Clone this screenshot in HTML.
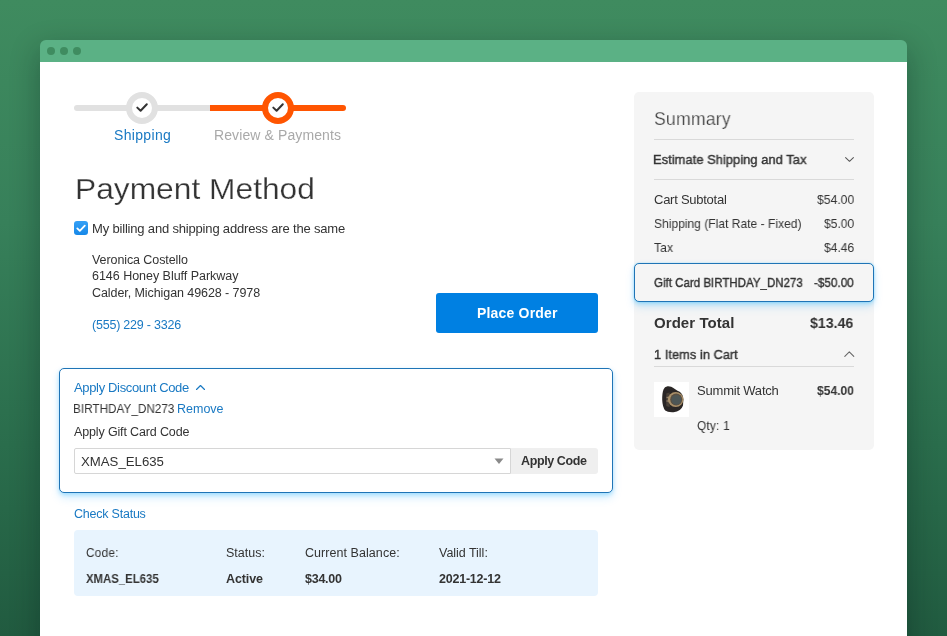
<!DOCTYPE html>
<html><head><meta charset="utf-8">
<style>
*{margin:0;padding:0;box-sizing:border-box}
html,body{width:947px;height:636px;overflow:hidden}
body{position:relative;font-family:"Liberation Sans",sans-serif;background:linear-gradient(180deg,#3f8b5f 0%,#37805a 35%,#2a6d4c 70%,#215b40 100%)}
.t{position:absolute;white-space:nowrap;line-height:1;font-family:"Liberation Sans",sans-serif;will-change:transform;-webkit-font-smoothing:antialiased}
.win{position:absolute;left:40px;top:40px;width:867px;height:620px;background:linear-gradient(#5bb185 0,#5bb185 22px,#fff 22px);border-radius:6px 6px 0 0;box-shadow:0 10px 30px rgba(0,20,20,0.33)}
.bar{position:absolute;left:0;top:0;width:867px;height:22px;background:transparent}
.dot{position:absolute;top:7px;width:8px;height:8px;border-radius:50%;background:#3f8c60}
.abs{position:absolute}
</style></head><body>
<div class="win">
  <div class="bar">
    <div class="dot" style="left:7px"></div>
    <div class="dot" style="left:20px"></div>
    <div class="dot" style="left:33px"></div>
  </div>
</div>
<!-- progress -->
<div class="abs" style="left:74px;top:105px;width:140px;height:6px;background:#e1e1e1;border-radius:3px 0 0 3px"></div>
<div class="abs" style="left:210px;top:105px;width:136px;height:6px;background:#ff5501;border-radius:0 3px 3px 0"></div>
<div class="abs" style="left:126px;top:92px;width:32px;height:32px;border-radius:50%;border:6px solid #e1e1e1;background:#fff"></div>
<div class="abs" style="left:262px;top:92px;width:32px;height:32px;border-radius:50%;border:6px solid #ff5501;background:#fff"></div>
<svg class="abs" style="left:0;top:0" width="947" height="636">
  <path d="M137.3 107.6 L140.6 110.8 L146.8 104.3" fill="none" stroke="#333" stroke-width="2" stroke-linecap="round" stroke-linejoin="round"/>
  <path d="M273.3 107.6 L276.6 110.8 L282.8 104.3" fill="none" stroke="#333" stroke-width="2" stroke-linecap="round" stroke-linejoin="round"/>
</svg>
<!-- checkbox -->
<div class="abs" style="left:74px;top:221px;width:14px;height:14px;border-radius:3px;background:linear-gradient(#35a0f6,#1688e8)"></div>
<svg class="abs" style="left:74px;top:221px" width="14" height="14"><path d="M3.3 7.4 L5.8 9.8 L10.8 4.6" fill="none" stroke="#fff" stroke-width="1.8" stroke-linecap="round" stroke-linejoin="round"/></svg>
<!-- place order -->
<div class="abs" style="left:436px;top:293px;width:162px;height:40px;border-radius:3px;background:#0080e2"></div>
<!-- discount panel -->
<div class="abs" style="left:59px;top:368px;width:554px;height:125px;border:1.5px solid #1f74b6;border-radius:5px;background:#fff;box-shadow:0 2px 4px rgba(0,170,255,0.28),0 5px 10px rgba(0,160,255,0.16)"></div>
<svg class="abs" style="left:195px;top:383px" width="12" height="9"><path d="M1.5 6.5 L5.5 2.5 L9.5 6.5" fill="none" stroke="#1979c3" stroke-width="1.15" stroke-linecap="round" stroke-linejoin="round"/></svg>
<div class="abs" style="left:74px;top:448px;width:437px;height:26px;border:1px solid #d6d6d6;border-radius:2px 0 0 2px;background:#fff"></div>
<svg class="abs" style="left:494px;top:458px" width="10" height="7"><path d="M0.5 0.5 L9.5 0.5 L5 6 Z" fill="#8a8a8a"/></svg>
<div class="abs" style="left:511px;top:448px;width:87px;height:26px;border-radius:0 3px 3px 0;background:#efefef"></div>
<!-- status box -->
<div class="abs" style="left:74px;top:530px;width:524px;height:66px;border-radius:4px;background:#e8f4fe"></div>
<!-- summary -->
<div class="abs" style="left:634px;top:92px;width:240px;height:358px;border-radius:5px;background:#f5f5f5"></div>
<div class="abs" style="left:654px;top:139px;width:200px;height:1px;background:#d9d9d9"></div>
<div class="abs" style="left:654px;top:179px;width:200px;height:1px;background:#d9d9d9"></div>
<svg class="abs" style="left:843px;top:154px" width="12" height="10"><path d="M2.6 3.6 L6.5 7.3 L10.4 3.6" fill="none" stroke="#555" stroke-width="1.05" stroke-linecap="round" stroke-linejoin="round"/></svg>
<div class="abs" style="left:634px;top:263px;width:240px;height:39px;border:1.5px solid #1f74b6;border-radius:5px;background:#f5f5f5;box-shadow:0 0 1.5px rgba(0,190,255,0.35),0 2px 4px rgba(0,170,255,0.28),0 5px 10px rgba(0,160,255,0.16)"></div>
<svg class="abs" style="left:843px;top:349px" width="12" height="10"><path d="M1.8 7.4 L6.3 2.8 L10.8 7.4" fill="none" stroke="#666" stroke-width="1.05" stroke-linecap="round" stroke-linejoin="round"/></svg>
<div class="abs" style="left:654px;top:366px;width:200px;height:1px;background:#d9d9d9"></div>
<div class="abs" style="left:654px;top:382px;width:35px;height:35px;background:#fff"></div>
<svg class="abs" style="left:654px;top:382px" width="36" height="36">
  <defs><filter id="bl" x="-20%" y="-20%" width="140%" height="140%"><feGaussianBlur stdDeviation="0.45"/></filter></defs>
  <g filter="url(#bl)">
  <path d="M9.5 7.5 Q10.5 4.5 13.5 4.2 Q17.5 4 19 5.8 L23.5 8.8 Q29.3 11 29.4 17.5 L29 23.5 Q27 29.5 19.5 30.2 Q13.5 30.5 11.2 28.5 Q8.5 25 8.2 18 Q8.1 11 9.5 7.5Z" fill="#2c2825"/>
  <path d="M12.3 11.5 L15.5 10.5 L15.5 25 L12.3 24Z" fill="#4a4038"/>
  <rect x="12.5" y="14.8" width="2.6" height="1.4" fill="#8d7d68"/>
  <rect x="12.5" y="18.3" width="2.6" height="1.4" fill="#8d7d68"/>
  <ellipse cx="21.7" cy="17.5" rx="7.8" ry="7.5" fill="#a98f69"/>
  <ellipse cx="22.2" cy="17.6" rx="6" ry="6" fill="#5a4f42"/>
  <ellipse cx="22.4" cy="17.8" rx="4.9" ry="4.9" fill="#4e5656"/>
  </g>
</svg>
<div class="t" id="t0" style="left:113.92px;top:127.75px;font-size:14px;font-weight:400;color:#1979c3;letter-spacing:0.328px;">Shipping</div>
<div class="t" id="t1" style="left:214.00px;top:128.05px;font-size:14px;font-weight:400;color:#a9a9a9;letter-spacing:0.108px;">Review &amp; Payments</div>
<div class="t" id="t2" style="left:74.68px;top:174.00px;font-size:30px;font-weight:400;color:#333;letter-spacing:0.000px;transform:scaleX(1.0578);transform-origin:0 0;-webkit-text-stroke:0.25px #fff;">Payment Method</div>
<div class="t" id="t3" style="left:92.30px;top:221.80px;font-size:13px;font-weight:400;color:#333333;letter-spacing:-0.178px;">My billing and shipping address are the same</div>
<div class="t" id="t4" style="left:92.40px;top:254.02px;font-size:12.5px;font-weight:400;color:#333333;letter-spacing:-0.083px;">Veronica Costello</div>
<div class="t" id="t5" style="left:92.40px;top:269.52px;font-size:12.5px;font-weight:400;color:#333333;letter-spacing:-0.027px;">6146 Honey Bluff Parkway</div>
<div class="t" id="t6" style="left:92.40px;top:286.82px;font-size:12.5px;font-weight:400;color:#333333;letter-spacing:-0.075px;">Calder, Michigan 49628 - 7978</div>
<div class="t" id="t7" style="left:92.40px;top:318.72px;font-size:12.5px;font-weight:400;color:#1979c3;letter-spacing:-0.218px;">(555) 229 - 3326</div>
<div class="t" id="t8" style="left:476.90px;top:305.95px;font-size:14px;font-weight:700;color:#fff;letter-spacing:0.185px;">Place Order</div>
<div class="t" id="t9" style="left:74.30px;top:381.30px;font-size:13px;font-weight:400;color:#1979c3;letter-spacing:-0.343px;">Apply Discount Code</div>
<div class="t" id="t10" style="left:73.37px;top:402.92px;font-size:12.5px;font-weight:400;color:#333333;letter-spacing:0.046px;transform:scaleX(0.9349);transform-origin:0 0;">BIRTHDAY_DN273</div>
<div class="t" id="t11" style="left:177.40px;top:402.92px;font-size:12.5px;font-weight:400;color:#1979c3;letter-spacing:0.001px;">Remove</div>
<div class="t" id="t12" style="left:74.30px;top:426.22px;font-size:12.5px;font-weight:400;color:#333333;letter-spacing:-0.140px;">Apply Gift Card Code</div>
<div class="t" id="t13" style="left:81.40px;top:454.63px;font-size:13.2px;font-weight:400;color:#333333;letter-spacing:0.011px;">XMAS_EL635</div>
<div class="t" id="t14" style="left:521.40px;top:454.72px;font-size:12.5px;font-weight:700;color:#333333;letter-spacing:-0.388px;">Apply Code</div>
<div class="t" id="t15" style="left:74.40px;top:508.22px;font-size:12.5px;font-weight:400;color:#1979c3;letter-spacing:-0.226px;">Check Status</div>
<div class="t" id="t16" style="left:86.40px;top:547.22px;font-size:12.5px;font-weight:400;color:#333333;letter-spacing:0.300px;transform:scaleX(0.9427);transform-origin:0 0;">Code:</div>
<div class="t" id="t17" style="left:226.10px;top:547.22px;font-size:12.5px;font-weight:400;color:#333333;letter-spacing:0.020px;">Status:</div>
<div class="t" id="t18" style="left:305.10px;top:547.22px;font-size:12.5px;font-weight:400;color:#333333;letter-spacing:0.058px;">Current Balance:</div>
<div class="t" id="t19" style="left:439.30px;top:547.22px;font-size:12.5px;font-weight:400;color:#333333;letter-spacing:-0.024px;">Valid Till:</div>
<div class="t" id="t20" style="left:86.40px;top:572.72px;font-size:12.5px;font-weight:700;color:#333333;letter-spacing:0.000px;transform:scaleX(0.9094);transform-origin:0 0;">XMAS_EL635</div>
<div class="t" id="t21" style="left:226.10px;top:572.72px;font-size:12.5px;font-weight:700;color:#333333;letter-spacing:-0.113px;">Active</div>
<div class="t" id="t22" style="left:305.10px;top:572.72px;font-size:12.5px;font-weight:700;color:#333333;letter-spacing:-0.256px;">$34.00</div>
<div class="t" id="t23" style="left:439.30px;top:572.72px;font-size:12.5px;font-weight:700;color:#333333;letter-spacing:-0.221px;">2021-12-12</div>
<div class="t" id="t24" style="left:653.76px;top:109.02px;font-size:19px;font-weight:400;color:#383838;letter-spacing:0.200px;transform:scaleX(0.9292);transform-origin:0 0;-webkit-text-stroke:0.25px #f5f5f5;">Summary</div>
<div class="t" id="t25" style="left:653.41px;top:153.00px;font-size:13px;font-weight:400;color:#333333;letter-spacing:0.050px;transform:scaleX(0.9907);transform-origin:0 0;-webkit-text-stroke:0.4px #333;">Estimate Shipping and Tax</div>
<div class="t" id="t26" style="left:653.76px;top:193.00px;font-size:13px;font-weight:400;color:#333333;letter-spacing:-0.259px;">Cart Subtotal</div>
<div class="t" id="t27" style="left:816.70px;top:193.00px;font-size:13px;font-weight:400;color:#333333;letter-spacing:0.000px;transform:scaleX(0.9360);transform-origin:0 0;">$54.00</div>
<div class="t" id="t28" style="left:654.40px;top:217.30px;font-size:13px;font-weight:400;color:#333333;letter-spacing:0.031px;transform:scaleX(0.9229);transform-origin:0 0;">Shipping (Flat Rate - Fixed)</div>
<div class="t" id="t29" style="left:823.70px;top:217.30px;font-size:13px;font-weight:400;color:#333333;letter-spacing:0.000px;transform:scaleX(0.9287);transform-origin:0 0;">$5.00</div>
<div class="t" id="t30" style="left:654.40px;top:241.20px;font-size:13px;font-weight:400;color:#333333;letter-spacing:0.300px;transform:scaleX(0.9165);transform-origin:0 0;">Tax</div>
<div class="t" id="t31" style="left:823.70px;top:241.20px;font-size:13px;font-weight:400;color:#333333;letter-spacing:0.000px;transform:scaleX(0.9287);transform-origin:0 0;">$4.46</div>
<div class="t" id="t32" style="left:653.92px;top:276.40px;font-size:13px;font-weight:400;color:#333333;letter-spacing:0.026px;transform:scaleX(0.8829);transform-origin:0 0;-webkit-text-stroke:0.4px #333;">Gift Card BIRTHDAY_DN273</div>
<div class="t" id="t33" style="left:813.90px;top:276.40px;font-size:13px;font-weight:400;color:#333333;letter-spacing:0.000px;transform:scaleX(0.9006);transform-origin:0 0;-webkit-text-stroke:0.4px #333;">-$50.00</div>
<div class="t" id="t34" style="left:653.92px;top:315.00px;font-size:15px;font-weight:700;color:#333333;letter-spacing:0.064px;">Order Total</div>
<div class="t" id="t35" style="left:810.40px;top:315.00px;font-size:15px;font-weight:700;color:#333333;letter-spacing:0.000px;transform:scaleX(0.9443);transform-origin:0 0;">$13.46</div>
<div class="t" id="t36" style="left:653.92px;top:348.30px;font-size:13px;font-weight:400;color:#333333;letter-spacing:0.086px;transform:scaleX(0.9775);transform-origin:0 0;-webkit-text-stroke:0.4px #333;">1 Items in Cart</div>
<div class="t" id="t37" style="left:697.20px;top:384.20px;font-size:13px;font-weight:400;color:#333333;letter-spacing:-0.200px;">Summit Watch</div>
<div class="t" id="t38" style="left:816.70px;top:384.20px;font-size:13px;font-weight:700;color:#333333;letter-spacing:0.000px;transform:scaleX(0.9284);transform-origin:0 0;">$54.00</div>
<div class="t" id="t39" style="left:697.20px;top:418.50px;font-size:13px;font-weight:400;color:#333333;letter-spacing:0.192px;transform:scaleX(0.9173);transform-origin:0 0;">Qty: 1</div>
</body></html>
